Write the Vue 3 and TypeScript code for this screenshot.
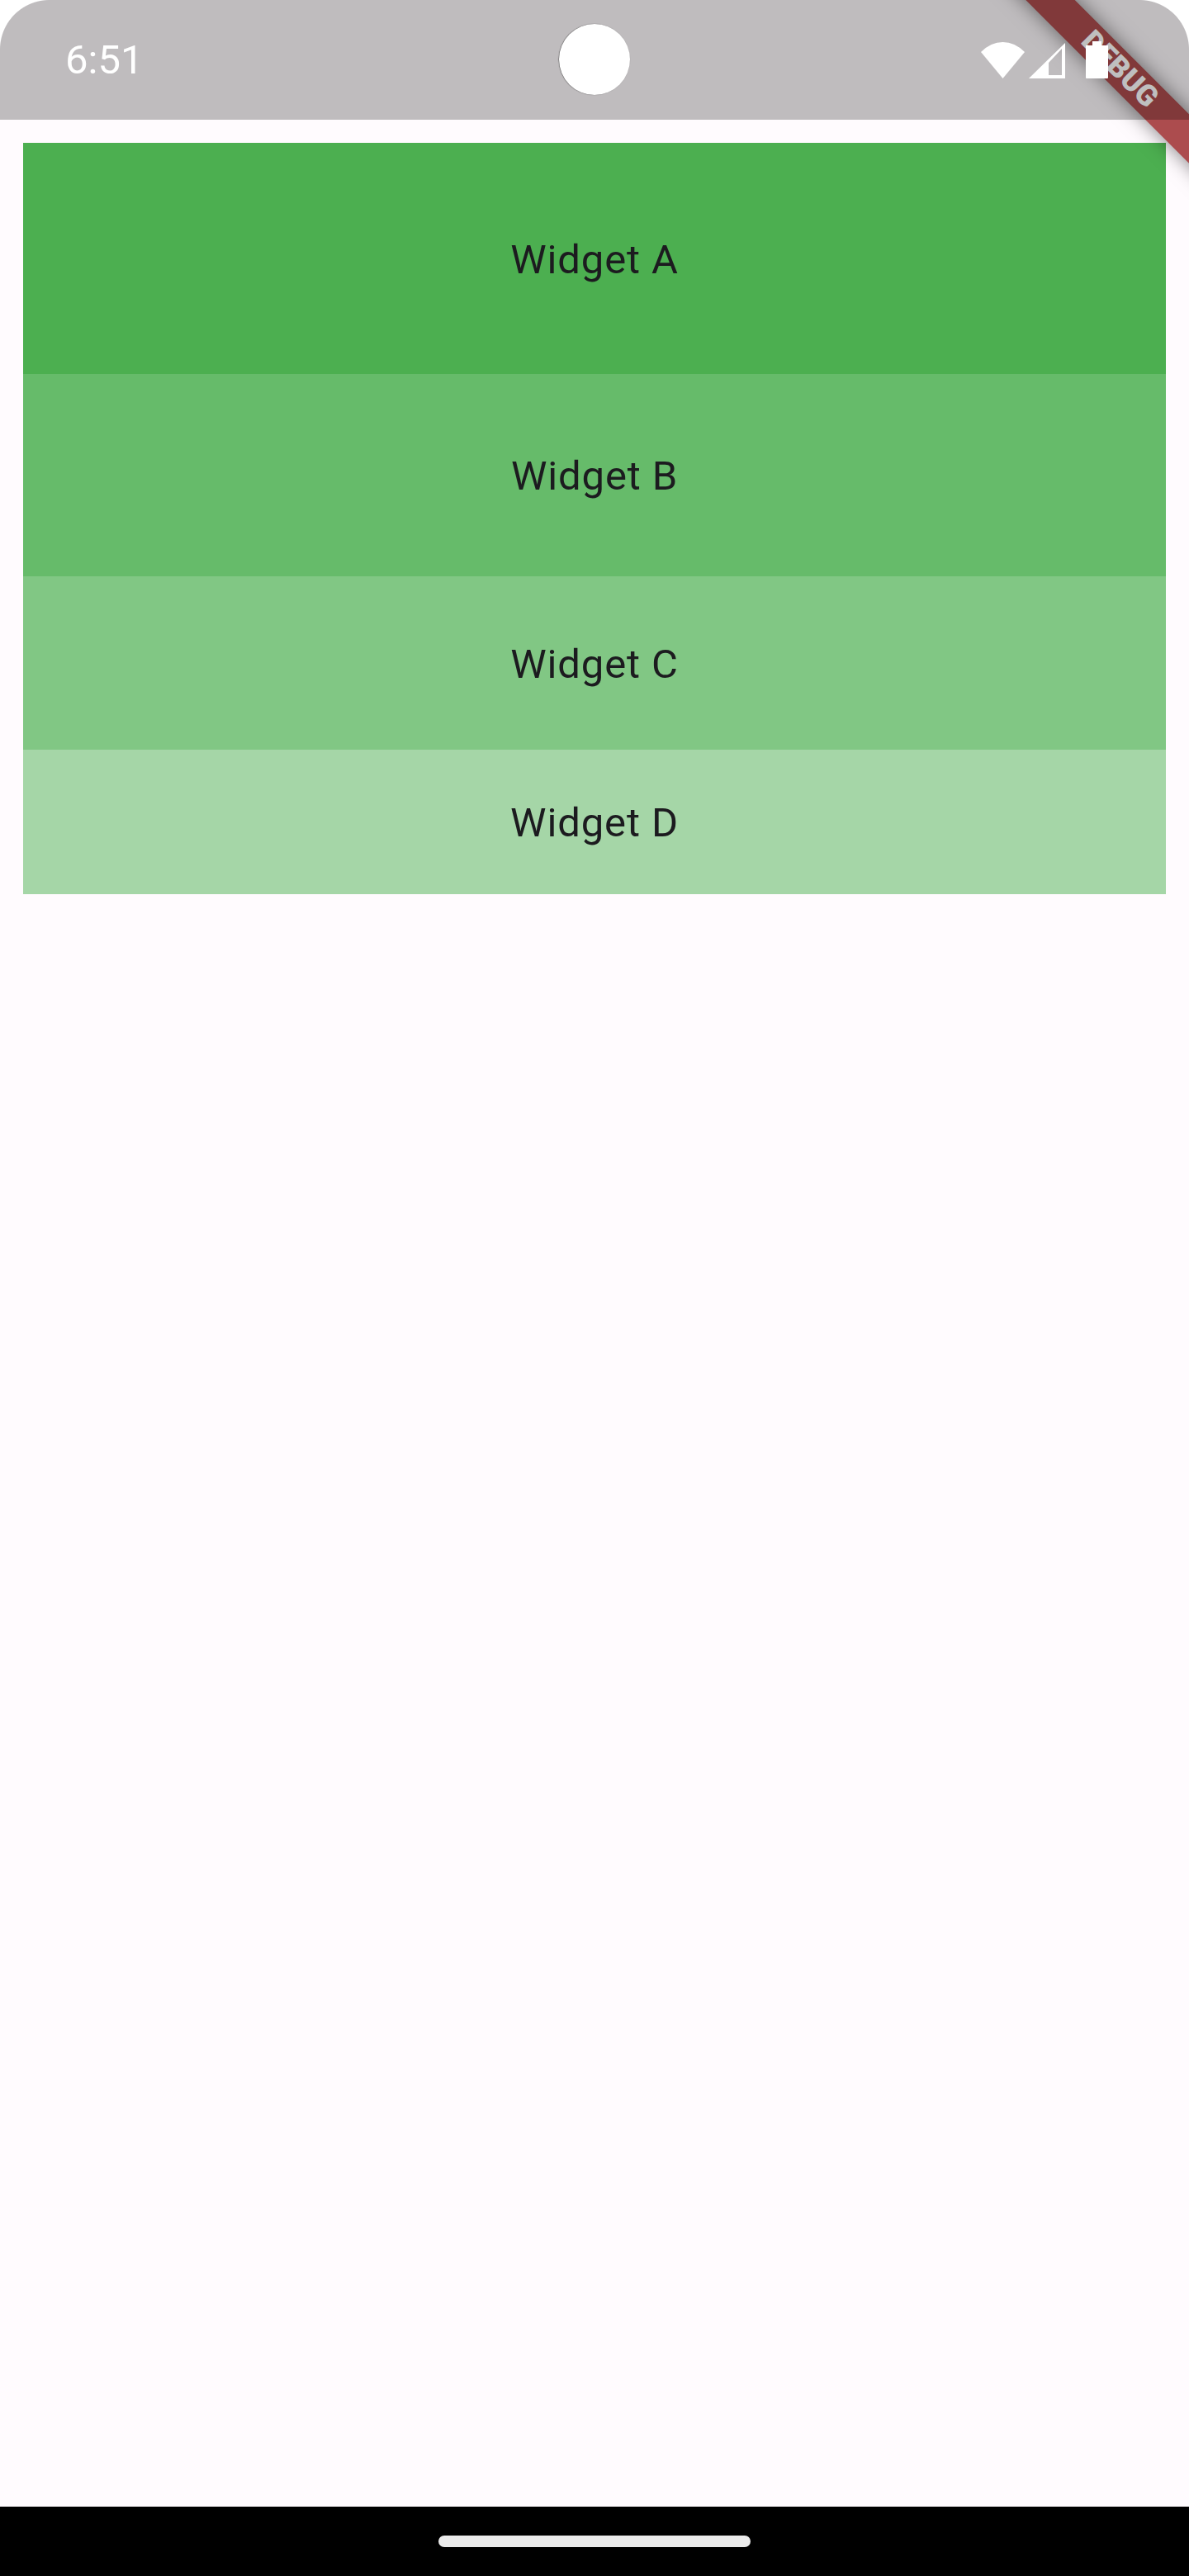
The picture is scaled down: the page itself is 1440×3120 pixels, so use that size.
<template>
  <div class="screen">
    <main class="content">
      <div
        v-for="widget in widgets"
        :key="widget.name"
        class="widget"
        :style="{ height: widget.height + 'px', background: widget.color }"
      >
        {{ widget.name }}
      </div>
    </main>

    <footer class="nav-bar">
      <div class="home-pill"></div>
    </footer>

    <div class="ribbon"><span>DEBUG</span></div>

    <header class="status-bar">
      <span class="time">6:51</span>
      <div class="camera"></div>
      <div class="status-icons">
        <svg class="wifi" width="53" height="44" viewBox="0 0 53 44">
          <path d="M0 12 Q12 0 26.5 0 Q41 0 53 12 L26.5 44 Z" fill="#fff" />
        </svg>
        <svg class="signal" width="44" height="43" viewBox="0 0 44 43">
          <path
            fill-rule="evenodd"
            d="M0 43 L44 0 L44 43 Z M24 24 L24 39 L40 39 L40 7 Z"
            fill="#fff"
          />
        </svg>
        <svg class="battery" width="27" height="45" viewBox="0 0 27 45">
          <path d="M8 0 H19 V5 H27 V44 Q27 45 26 45 H1 Q0 45 0 44 V5 H8 Z" fill="#fff" />
        </svg>
      </div>
      <i class="corner corner-left"></i>
      <i class="corner corner-right"></i>
    </header>
  </div>
</template>

<script setup lang="ts">
interface WidgetRow {
  name: string;
  height: number;
  color: string;
}

const widgets: WidgetRow[] = [
  { name: 'Widget A', height: 280, color: '#4caf50' },
  { name: 'Widget B', height: 245, color: '#66bb6a' },
  { name: 'Widget C', height: 210, color: '#81c784' },
  { name: 'Widget D', height: 175, color: '#a5d6a7' }
];
</script>

<style>
html,
body {
  margin: 0;
  background: #fffbfe;
}
</style>

<style scoped>
.screen {
  position: relative;
  display: flex;
  flex-direction: column;
  width: 1440px;
  height: 3120px;
  overflow: hidden;
  background: #fffbfe;
  font-family: Roboto, "Liberation Sans", sans-serif;
}

.content {
  flex: 1;
  padding: 173px 28px 0;
}

.widget {
  display: flex;
  align-items: center;
  justify-content: center;
  box-sizing: border-box;
  padding-top: 2px;
  font-size: 49px;
  letter-spacing: 0.875px;
  color: #1c1b1f;
}

.nav-bar {
  display: flex;
  align-items: center;
  justify-content: center;
  height: 84px;
  background: #000;
}

.home-pill {
  width: 378px;
  height: 14px;
  border-radius: 7px;
  background: #ebebeb;
}

/* debug banner sits under the translucent status bar */
.ribbon {
  position: absolute;
  top: 63px;
  left: 1156px;
  display: flex;
  align-items: center;
  justify-content: center;
  width: 400px;
  height: 42px;
  transform: rotate(45deg);
  background: #ac4c4e;
  box-shadow: 0 0 24px rgba(0, 0, 0, 0.5);
  color: #fff;
  font-size: 35.7px;
  font-weight: 900;
  line-height: 1;
}

.status-bar {
  position: absolute;
  top: 0;
  left: 0;
  display: flex;
  align-items: center;
  justify-content: space-between;
  box-sizing: border-box;
  width: 1440px;
  height: 145px;
  padding: 0 98px 0 79px;
  background: rgba(0, 0, 0, 0.25);
}

.time {
  font-size: 49px;
  line-height: 1;
  color: #fff;
}

.camera {
  position: absolute;
  top: 29px;
  left: 677px;
  width: 86px;
  height: 86px;
  border-radius: 50%;
  background: #fff;
  box-shadow: -0.5px 0 1px rgba(0, 0, 0, 0.6);
}

.status-icons {
  display: flex;
  align-items: flex-end;
  gap: 5px;
  height: 45px;
  margin-top: -1px;
}

.signal {
  margin-right: 20px;
}

.corner {
  position: absolute;
  top: 0;
  width: 60px;
  height: 60px;
}

.corner-left {
  left: 0;
  background: radial-gradient(circle at 100% 100%, transparent 59.5px, #fff 60.5px);
}

.corner-right {
  right: 0;
  background: radial-gradient(circle at 0 100%, transparent 59.5px, #fff 60.5px);
}
</style>
